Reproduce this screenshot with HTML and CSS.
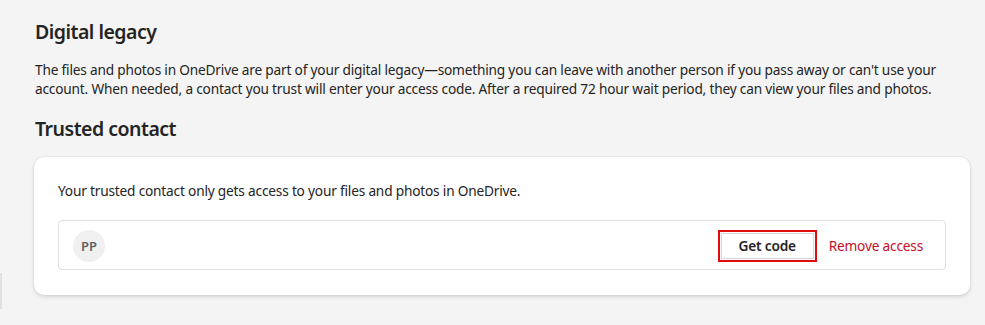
FILE: index.html
```html
<!DOCTYPE html>
<html lang="en">
<head>
<meta charset="utf-8">
<title>Digital legacy</title>
<link rel="stylesheet" href="styles.css">
</head>
<body>
<div class="edge"></div>
<main class="page">
  <h2 class="title">Digital legacy</h2>
  <p class="desc">The files and photos in OneDrive are part of your digital legacy—something you can leave with another person if you pass away or can't use your account. When needed, a contact you trust will enter your access code. After a required 72 hour wait period, they can view your files and photos.</p>
  <h2 class="title title-2">Trusted contact</h2>
  <section class="card">
    <p class="card-text">Your trusted contact only gets access to your files and photos in OneDrive.</p>
    <div class="contact-row">
      <div class="avatar">PP</div>
      <div class="actions">
        <button class="btn">Get code</button>
        <a class="link" href="#">Remove access</a>
      </div>
    </div>
  </section>
</main>
</body>
</html>
```

FILE: styles.css
```css
* { box-sizing: border-box; }
html, body { margin: 0; }
body {
  background: #f4f4f4;
  font-family: "Segoe UI", "Noto Sans", sans-serif;
  color: #242424;
  width: 985px;
  height: 325px;
  overflow: hidden;
  position: relative;
  letter-spacing: -0.2px;
}
.edge {
  position: absolute;
  left: 0;
  top: 273px;
  width: 2px;
  height: 36px;
  background: #e0e0e0;
}
.page {
  padding: 18px 15px 0 34px;
}
.title {
  margin: 0 0 0 1px;
  font-size: 19.5px;
  letter-spacing: -0.5px;
  line-height: 28px;
  font-weight: 600;
}
.desc {
  margin: 14px 0 17px 1px;
  font-size: 13.7px;
  line-height: 19px;
  width: 915px;
}
.card {
  margin-top: 14px;
  background: #fff;
  border-radius: 10px;
  box-shadow: 0 2px 4px rgba(0,0,0,0.12), 0 0 2px rgba(0,0,0,0.10);
  padding: 24px 24px 25px;
}
.card-text {
  margin: 0 0 20px;
  font-size: 13.7px;
  line-height: 19px;
}
.contact-row {
  height: 50px;
  border: 1px solid #e0e0e0;
  border-radius: 4px;
  display: flex;
  align-items: center;
  justify-content: space-between;
  padding: 1px 22px 0 14px;
}
.avatar {
  width: 32px;
  height: 32px;
  border-radius: 50%;
  background: #f0f0f0;
  color: #616161;
  font-size: 13px;
  font-weight: 600;
  letter-spacing: 0;
  display: flex;
  align-items: center;
  justify-content: center;
}
.actions {
  display: flex;
  align-items: center;
  gap: 12px;
}
.btn {
  font-family: inherit;
  letter-spacing: -0.2px;
  width: 99px;
  height: 32px;
  border: 2px solid #e00b0b;
  background: #fff;
  box-shadow: inset 0 0 0 1px #fff, inset 0 0 0 2px #d6d6d6;
  color: #242424;
  font-size: 13.7px;
  font-weight: 600;
  padding: 0;
  border-radius: 0;
}
.link {
  color: #c50f1f;
  font-size: 13.7px;
  text-decoration: none;
}
```
